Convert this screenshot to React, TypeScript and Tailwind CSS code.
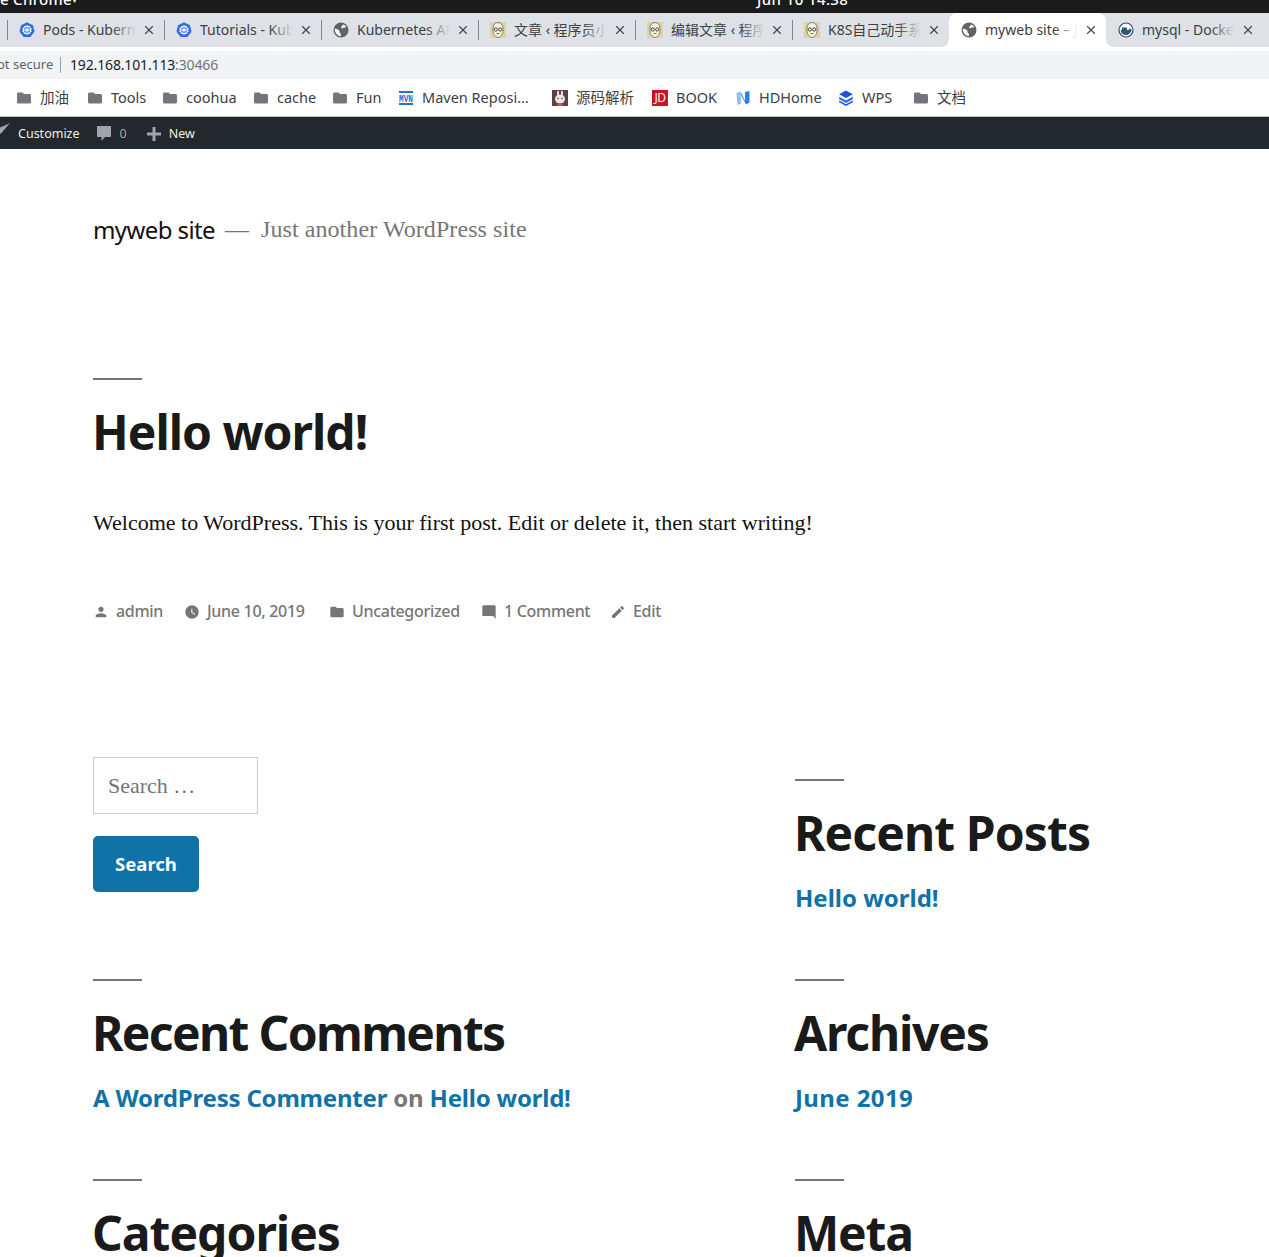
import React from 'react';
import { X } from 'lucide-react';

const UI = '"Noto Sans", "Noto Sans CJK SC", sans-serif';

const Globe = () => (
  <svg width="16" height="16" viewBox="0 0 16 16">
    <circle cx="8" cy="8" r="7.5" fill="#5f6368" />
    <path d="M1.800 6.500L5 7.500l1.500 1.500v1.500l1.500 1.500-.3 2.200C4.500 14 1.500 10.500 1.800 6.500zM10 2.500c1.500.5 2.600 1.300 3.400 2.500L12 5.500h-1.500L9.500 6.500 8 5.500 9 4z" fill="#fff" />
  </svg>
);

const K8s = () => (
  <svg width="16" height="16" viewBox="0 0 16 16">
    <path d="M8 .3l6 2.900 1.500 6.500-4.100 5.200H4.600L.5 9.700 2 3.200z" fill="#326ce5" />
    <circle cx="8" cy="8" r="3.800" fill="none" stroke="#fff" strokeWidth="1.100" />
    <path d="M8 3v10M3.300 6.500l9.400 3M12.700 6.500l-9.400 3M5 12l6-8M11 12L5 4" stroke="#fff" strokeWidth=".7" />
  </svg>
);

const Avatar = () => (
  <svg width="16" height="16" viewBox="0 0 16 16">
    <rect width="16" height="16" fill="#d9d3a8" />
    <path d="M3 6c0-3 2-5.500 5-5.500S13 3 13 6v3c0 3-2.500 6.500-5 6.500S3 12 3 9z" fill="#f5f1dc" stroke="#6b6650" strokeWidth=".8" />
    <circle cx="5.800" cy="7.500" r="1.600" fill="none" stroke="#333" strokeWidth=".9" />
    <circle cx="10.200" cy="7.500" r="1.600" fill="none" stroke="#333" strokeWidth=".9" />
    <path d="M6.500 11.500h3" stroke="#555" strokeWidth=".8" />
  </svg>
);

const Docker = () => (
  <svg width="16" height="16" viewBox="0 0 16 16">
    <circle cx="8" cy="8" r="7" fill="#fff" stroke="#2f4f6f" strokeWidth="1.200" />
    <path d="M2.500 8h8c.5-1 1.800-1.500 3-1-.2 3.500-2.500 6-5.500 6-3 0-5-2-5.500-5z" fill="#2f5878" />
    <path d="M4 5.500h5V8H4z" fill="#2f5878" />
  </svg>
);

const Folder = () => (
  <svg width="16" height="16" viewBox="0 0 16 16">
    <path d="M2.500 2.500h4l1.500 1.500h5.500c.8 0 1.500.7 1.500 1.500v6.500c0 .8-.7 1.500-1.500 1.500h-11c-.8 0-1.500-.7-1.500-1.500V4c0-.8.700-1.500 1.500-1.500z" fill="#72767a" />
  </svg>
);

const Mvn = () => (
  <svg width="16" height="16" viewBox="0 0 16 16">
    <rect x="1" y="1" width="14" height="2" fill="#2a6fd0" />
    <rect x="1" y="13" width="14" height="2" fill="#2a6fd0" />
    <text x="1" y="11.500" textLength="14" lengthAdjust="spacingAndGlyphs" fontSize="10" fontWeight="700" fill="#2a6fd0" fontFamily="Liberation Mono, monospace">MVN</text>
  </svg>
);

const Rabbit = () => (
  <svg width="16" height="16" viewBox="0 0 16 16">
    <rect width="16" height="16" fill="#5a4242" />
    <path d="M5 1h2v5H5zM9 1h2v5H9z" fill="#e8d8d8" />
    <ellipse cx="8" cy="9" rx="5" ry="4.500" fill="#efe4e4" />
    <path d="M5 14l2-1h2l2 1v2H5z" fill="#a86060" />
    <circle cx="6" cy="8.500" r=".7" fill="#222" />
    <circle cx="10" cy="8.500" r=".7" fill="#222" />
  </svg>
);

const Jd = () => (
  <div className="flex h-4 w-4 items-center justify-center bg-[#c9151e] text-[12px] leading-none tracking-[-0.5px] text-white">JD</div>
);

const Hd = () => (
  <svg width="16" height="16" viewBox="0 0 16 16">
    <path d="M1.500 3l4-1.500.5 12-3.500 1.500z" fill="#8cc0f2" />
    <path d="M5.500 1.500L10 11V2l4.500-1v11.500L11 14.500 6 5z" fill="#2f7fe0" />
  </svg>
);

const Wps = () => (
  <svg width="16" height="16" viewBox="0 0 16 16">
    <path d="M8 .5l6.800 3.700L8 8 1.200 4.200z" fill="#1e50d8" />
    <path d="M1.200 6.800L8 10.500l6.800-3.700v2.400L8 13 1.200 9.200z" fill="#1e6ee8" />
    <path d="M1.200 10.500L8 14.200l6.800-3.700v1.800L8 16l-6.800-3.700z" fill="#1e50d8" />
  </svg>
);

const tabs = [
  { title: 'Pods - Kubernetes', icon: <K8s /> },
  { title: 'Tutorials - Kubernetes', icon: <K8s /> },
  { title: 'Kubernetes API', icon: <Globe /> },
  { title: '文章 ‹ 程序员小', icon: <Avatar /> },
  { title: '编辑文章 ‹ 程序员', icon: <Avatar /> },
  { title: 'K8S自己动手系列', icon: <Avatar /> },
  { title: 'myweb site – Just', icon: <Globe />, active: true },
  { title: 'mysql - Docker Hub', icon: <Docker /> },
];

const bookmarks = [
  { label: '加油', icon: <Folder />, w: 'w-[71px]' },
  { label: 'Tools', icon: <Folder />, w: 'w-[75px]' },
  { label: 'coohua', icon: <Folder />, w: 'w-[91px]' },
  { label: 'cache', icon: <Folder />, w: 'w-[79px]' },
  { label: 'Fun', icon: <Folder />, w: 'w-[66px]' },
  { label: 'Maven Reposi…', icon: <Mvn />, w: 'w-[154px]' },
  { label: '源码解析', icon: <Rabbit />, w: 'w-[100px]' },
  { label: 'BOOK', icon: <Jd />, w: 'w-[83px]' },
  { label: 'HDHome', icon: <Hd />, w: 'w-[103px]' },
  { label: 'WPS', icon: <Wps />, w: 'w-[75px]' },
  { label: '文档', icon: <Folder />, w: 'w-[70px]' },
];

const metaIcons: Record<string, React.ReactNode> = {
  person: <path d="M12 12c2.210 0 4-1.790 4-4s-1.790-4-4-4-4 1.790-4 4 1.790 4 4 4zm0 2c-2.670 0-8 1.340-8 4v2h16v-2c0-2.660-5.330-4-8-4z" />,
  watch: <path d="M12 2C6.500 2 2 6.500 2 12s4.500 10 10 10 10-4.500 10-10S17.500 2 12 2zm4.200 14.200L11 13V7h1.500v5.200l4.500 2.700-.8 1.300z" />,
  folder: <path d="M10 4H4c-1.100 0-1.990.9-1.990 2L2 18c0 1.100.9 2 2 2h16c1.100 0 2-.9 2-2V8c0-1.100-.9-2-2-2h-8l-2-2z" />,
  comment: <path d="M21.990 4c0-1.100-.89-2-1.990-2H4c-1.100 0-2 .9-2 2v12c0 1.100.9 2 2 2h14l4 4-.01-18z" />,
  edit: <path d="M3 17.250V21h3.750L17.810 9.940l-3.750-3.750L3 17.250zM20.710 7.040c.39-.39.39-1.020 0-1.410l-2.340-2.340c-.39-.39-1.020-.39-1.410 0l-1.830 1.830 3.750 3.750 1.830-1.830z" />,
};

const meta = [
  { icon: 'person', label: 'admin', w: 'w-[91px]' },
  { icon: 'watch', label: 'June 10, 2019', w: 'w-[145px]' },
  { icon: 'folder', label: 'Uncategorized', w: 'w-[152px]' },
  { icon: 'comment', label: '1 Comment', w: 'w-[129px]' },
  { icon: 'edit', label: 'Edit', w: 'w-[60px]' },
];

const Widget: React.FC<{ title: string; tracking?: string; children?: React.ReactNode }> = ({
  title,
  tracking = 'tracking-[-1.2px]',
  children,
}) => (
  <section className="h-[200px]">
    <div className="h-[2px] w-[49px] bg-[#767676]" />
    <h2 className={`ml-[-1px] mt-[22px] text-[48px] font-bold leading-[60px] text-[#1a1a1a] ${tracking}`}>{title}</h2>
    {children}
  </section>
);

const linkClass = 'text-[#0f73a8]';

export default function App() {
  return (
    <div className="h-[1257px] w-[1269px] overflow-hidden bg-white" style={{ fontFamily: UI }}>
      {/* system bar, cut off by the top of the photo */}
      <div className="relative h-[13px] overflow-hidden bg-[#1b1b1b] text-[15px] font-medium leading-[13px] text-white">
        <span className="absolute left-0 top-[-7px] tracking-[0.3px]">e Chrome</span>
        <span className="absolute left-[72px] top-[-7px] text-[10px]">▾</span>
        <span className="absolute left-[757px] top-[-7px] tracking-[0.4px]">Jun 10  14:38</span>
      </div>

      {/* tab strip */}
      <div className="flex h-[34px] items-stretch bg-[#dee1e6] pl-[7px]">
        {tabs.map((tab, i) => (
          <div
            key={i}
            className={`relative flex w-[157px] shrink-0 items-center pl-[12px] pr-[8px] ${
              tab.active ? 'rounded-t-[8px] bg-white' : ''
            }`}
          >
            {!tab.active && !tabs[i - 1]?.active && (
              <span className="absolute left-0 top-[7px] h-[20px] w-px bg-[#80868b]" />
            )}
            {tab.active && (
              <>
                <span className="absolute bottom-0 left-[-8px] h-[8px] w-[8px] bg-white">
                  <span className="block h-full w-full rounded-br-[8px] bg-[#dee1e6]" />
                </span>
                <span className="absolute bottom-0 right-[-8px] h-[8px] w-[8px] bg-white">
                  <span className="block h-full w-full rounded-bl-[8px] bg-[#dee1e6]" />
                </span>
              </>
            )}
            <span className="shrink-0">{tab.icon}</span>
            <div className="relative ml-[8px] w-[93px] overflow-hidden whitespace-nowrap text-[14px] leading-[20px] text-[#3c4043]">
              {tab.title}
              <span
                className={`absolute bottom-0 right-0 top-0 w-[24px] bg-gradient-to-r from-transparent ${
                  tab.active ? 'to-white' : 'to-[#dee1e6]'
                }`}
              />
            </div>
            <X size={14} strokeWidth={2} className="ml-auto shrink-0 text-[#44474b]" />
          </div>
        ))}
      </div>

      {/* address row */}
      <div className="h-[32px] bg-white pt-[4px]">
        <div className="flex h-[28px] items-center overflow-hidden bg-[#f1f3f4] pb-[2px]">
          <span className="ml-[-3px] mt-[2px] w-[56px] shrink-0 whitespace-nowrap text-right text-[13px] text-[#5f6368]">ot secure</span>
          <span className="ml-[7px] mt-[2px] h-[16px] w-px bg-[#9aa0a6]" />
          <span className="ml-[9px] text-[14px] tracking-[-0.15px] text-[#202124]">
            192.168.101.113<span className="text-[#70757a]">:30466</span>
          </span>
        </div>
      </div>

      {/* bookmarks */}
      <div className="flex h-[38px] items-center border-b border-[#bfc1c4] bg-white pl-[16px]">
        {bookmarks.map(b => (
          <div key={b.label} className={`flex shrink-0 items-center gap-[8px] ${b.w}`}>
            {b.icon}
            <span className="whitespace-nowrap text-[14.5px] text-[#3c4043]">{b.label}</span>
          </div>
        ))}
      </div>

      {/* wp admin bar */}
      <div className="flex h-[32px] items-center bg-[#23282d] pt-[2px] text-[12.5px] text-[#eee]">
        <svg width="12" height="14" viewBox="0 0 12 14" className="mt-[-8px] text-[#a0a5aa]">
          <path d="M10 0L4 7 1.500 10 0 11V4.500L6 2z" fill="currentColor" />
        </svg>
        <span className="ml-[6px]">Customize</span>
        <svg width="16" height="18" viewBox="0 0 16 18" className="ml-[16px]">
          <path d="M2 1h12c.6 0 1 .4 1 1v9c0 .6-.4 1-1 1H9l-3.500 4v-4H2c-.6 0-1-.4-1-1V2c0-.6.4-1 1-1z" fill="#a0a5aa" />
        </svg>
        <span className="ml-[8px] text-[#a0a5aa]">0</span>
        <svg width="14" height="14" viewBox="0 0 14 14" className="ml-[20px]">
          <path d="M5.500 0h3v5.500H14v3H8.500V14h-3V8.500H0v-3h5.500z" fill="#a0a5aa" />
        </svg>
        <span className="ml-[8px]">New</span>
      </div>

      {/* wordpress page */}
      <div className="pl-[93px]">
        <header className="flex h-[229px] items-start pt-[63px]">
          <span className="text-[24px] leading-[36px] tracking-[-0.6px] text-[#111]">myweb site</span>
          <div className="ml-[10px] mt-[-1px] text-[24px] leading-[36px] text-[#767676] [font-family:'Liberation_Serif',serif]">
            <span>—</span>
            <span className="ml-[12px] tracking-[0.08px]">Just another WordPress site</span>
          </div>
        </header>

        <div className="h-[2px] w-[49px] bg-[#767676]" />
        <h1 className="ml-[-1px] mt-[22px] text-[48px] font-bold leading-[60px] tracking-[-1px] text-[#1a1a1a]">Hello world!</h1>
        <p className="mt-[43px] text-[22px] leading-[36px] text-[#111] [font-family:'Liberation_Serif',serif]">
          Welcome to WordPress. This is your first post. Edit or delete it, then start writing!
        </p>

        <div className="mt-[58px] flex h-[24px] items-center text-[16px] font-medium tracking-[-0.3px] text-[#767676]">
          {meta.map(m => (
            <div key={m.label} className={`flex shrink-0 items-center ${m.w}`}>
              <svg width="16" height="16" viewBox="0 0 24 24" fill="currentColor" className="mr-[7px] mt-[2px] shrink-0">
                {metaIcons[m.icon]}
              </svg>
              <span className="whitespace-nowrap">{m.label}</span>
            </div>
          ))}
        </div>

        {/* widgets */}
        <div className="mt-[134px] grid grid-cols-[702px_1fr]">
          <section className="h-[222px]">
            <div className="flex h-[57px] w-[165px] items-center border border-[#ccc] pl-[14px] text-[22px] text-[#757575] [font-family:'Liberation_Serif',serif]">
              Search …
            </div>
            <button className="mt-[22px] flex h-[56px] w-[106px] items-center justify-center rounded-[5px] bg-[#0f73a8] text-[18.5px] font-bold text-white">
              Search
            </button>
          </section>
          <section className="h-[222px] pt-[22px]">
            <Widget title="Recent Posts" tracking="tracking-[-0.9px]">
              <a className={`mt-[17px] block text-[24px] font-bold leading-[36px] ${linkClass}`}>Hello world!</a>
            </Widget>
          </section>
          <Widget title="Recent Comments" tracking="tracking-[-1.65px]">
            <p className="mt-[17px] text-[24px] font-bold leading-[36px] tracking-[-0.2px] text-[#767676]">
              <a className={linkClass}>A WordPress Commenter</a> on <a className={linkClass}>Hello world!</a>
            </p>
          </Widget>
          <Widget title="Archives">
            <a className={`mt-[17px] block text-[24px] font-bold leading-[36px] tracking-[0.4px] ${linkClass}`}>June 2019</a>
          </Widget>
          <Widget title="Categories" tracking="tracking-[-1px]" />
          <Widget title="Meta" />
        </div>
      </div>
    </div>
  );
}
